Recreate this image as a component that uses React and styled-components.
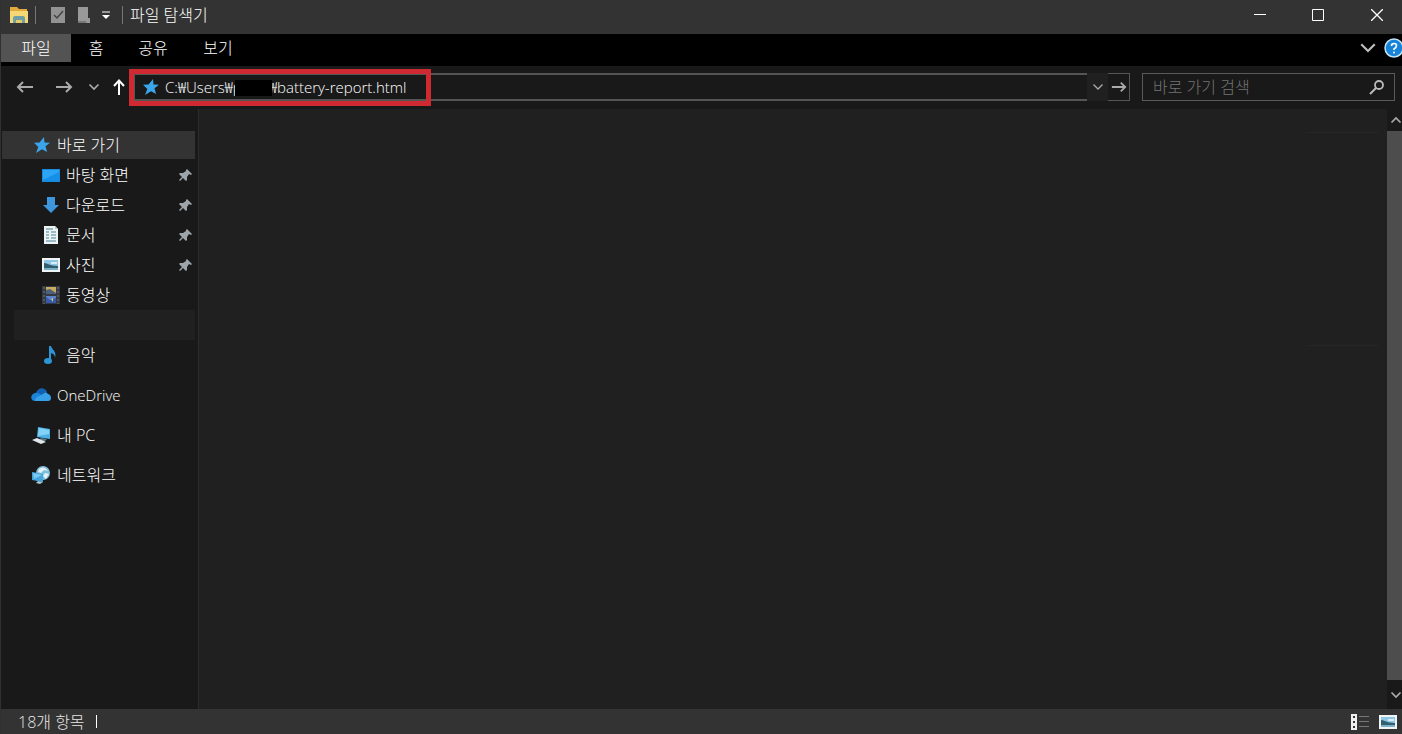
import { useState } from "react";
import styled, { createGlobalStyle } from "styled-components";

const GlobalStyle = createGlobalStyle`
  * {
    box-sizing: border-box;
  }
  body {
    margin: 0;
    background: #191919;
  }
  body, button, input {
    font-family: "Open Sans", "Noto Sans CJK KR", sans-serif;
    font-size: 16px;
    font-weight: 300;
    line-height: 20px;
    color: #fff;
  }
  button {
    padding: 0;
    border: none;
    background: transparent;
    display: flex;
    align-items: center;
    justify-content: center;
    flex-shrink: 0;
  }
  svg {
    display: block;
    flex-shrink: 0;
  }
`;

const Window = styled.div`
  display: flex;
  flex-direction: column;
  min-height: 100vh;
  border-left: 1px solid #303030;
`;

const TitleBar = styled.header`
  display: flex;
  align-items: center;
  height: 34px;
  padding: 0 0 4px 8px;
  background: #333;
`;

const QuickButton = styled.button`
  width: ${(props) => props.$width || 25}px;
  height: 24px;
`;

const Separator = styled.span`
  width: 1px;
  height: 18px;
  margin: 0 ${(props) => props.$gap}px 0 6px;
  background: #777;
`;

const WindowTitle = styled.h1`
  flex: 1;
  margin: 0;
  font-size: 16px;
  font-weight: 300;
`;

const CaptionButton = styled.button`
  width: 58px;
  height: 30px;

  &:last-child {
    width: 50px;
    margin-left: 5px;
  }
`;

const Ribbon = styled.nav`
  display: flex;
  align-items: center;
  height: 32px;
  padding-bottom: 4px;
  background: #000;
`;

const RibbonTab = styled.button`
  width: ${(props) => props.$width}px;
  height: 28px;
  background: ${(props) => (props.$active ? "#535353" : "transparent")};
`;

const RibbonTools = styled.div`
  display: flex;
  gap: 7px;
  margin-left: auto;
`;

const Toolbar = styled.div`
  display: flex;
  align-items: center;
  height: 43px;
  padding: 0 7px 1px 5px;
`;

const NavButton = styled.button`
  width: ${(props) => props.$width}px;
  height: 28px;
`;

const AddressBar = styled.div`
  position: relative;
  display: flex;
  flex: 1;
  height: 28px;
  margin-left: 1px;
`;

const AddressField = styled.label`
  display: flex;
  flex: 1;
  align-items: center;
  gap: 5px;
  padding-left: 5px;
  border: solid #555;
  border-width: 2px 0 2px 1px;
`;

const AddressInput = styled.input`
  flex: 1;
  min-width: 0;
  padding: 0;
  border: none;
  outline: none;
  background: transparent;
  font-size: 15px;
`;

const Redaction = styled.span`
  position: absolute;
  left: 101px;
  top: 7px;
  width: 37px;
  height: 16px;
  background: #000;
`;

const Highlight = styled.span`
  position: absolute;
  left: -5px;
  top: -4px;
  width: 302px;
  height: 37px;
  border: 5px solid #cf2a32;
  pointer-events: none;
`;

const HistoryButton = styled.button`
  width: 21px;
  height: 28px;
  background: #202020;
`;

const GoButton = styled.button`
  width: 22px;
  height: 28px;
  border: solid #555;
  border-width: 1px 1px 1px 0;
`;

const SearchBox = styled.label`
  display: flex;
  align-items: center;
  width: 253px;
  height: 28px;
  margin-left: 12px;
  padding: 0 9px 0 10px;
  border: 1px solid #5a5a5a;
`;

const SearchInput = styled.input`
  flex: 1;
  min-width: 0;
  padding: 0;
  border: none;
  outline: none;
  background: transparent;

  &::placeholder {
    color: #747474;
    opacity: 1;
  }
`;

const Main = styled.main`
  display: flex;
  flex: 1;
`;

const Sidebar = styled.aside`
  width: 198px;
  padding: 22px 3px 0 1px;
  border-right: 1px solid #2c2c2c;
`;

const TreeItem = styled.a`
  display: flex;
  align-items: center;
  gap: 6px;
  height: ${(props) => (props.$root ? 28 : 30)}px;
  margin-top: ${(props) => props.$space || 0}px;
  padding: 0 2px 0 ${(props) => (props.$root ? 29 : 40)}px;
  background: ${(props) => (props.$active ? "#333" : "transparent")};
  color: #fff;
  text-decoration: none;
`;

const ItemLabel = styled.span`
  flex: 1;
  font-size: ${(props) => props.$size || 16}px;
`;

const EmptyItem = styled.div`
  height: 30px;
  margin-left: 12px;
  background: #202020;
`;

const Files = styled.section`
  display: flex;
  flex: 1;
  flex-direction: column;
  align-items: flex-end;
  gap: 212px;
  padding: 23px 9px 0 0;
  background: #202020;
`;

const GroupLine = styled.hr`
  width: 72px;
  height: 1px;
  margin: 0;
  border: none;
  background: #262626;
`;

const Scrollbar = styled.div`
  display: flex;
  flex-direction: column;
  width: 15px;
`;

const ScrollButton = styled.button`
  height: ${(props) => props.$height}px;
  padding-left: 2px;
`;

const ScrollThumb = styled.div`
  flex: 1;
  background: #4d4d4d;
`;

const StatusBar = styled.footer`
  display: flex;
  align-items: center;
  height: 25px;
  padding: 0 5px 0 17px;
  background: #333;
`;

const StatusText = styled.span`
  padding-right: 11px;
  color: #e6e6e6;
`;

const Caret = styled.span`
  width: 1px;
  height: 13px;
  background: #fff;
`;

const ViewButtons = styled.div`
  display: flex;
  gap: 10px;
  margin-left: auto;
`;

const Chevron = ({ size = 12, color = "#aaa", up, weight = 1.7 }) => (
  <svg width={size} height={size} viewBox="0 0 12 12" fill="none" stroke={color} strokeWidth={weight}>
    <path d={up ? "M1.5 8.5 6 4l4.500 4.500" : "M1.500 3.500 6 8l4.500-4.500"} />
  </svg>
);

const Arrow = ({ direction, color = "#aaa", size = 18 }) => {
  const paths = {
    left: "M17 9H2M7 4 2 9l5 5",
    right: "M1 9h15M11 4l5 5-5 5",
    up: "M9 17V3M4 8l5-5.500L14 8",
  };
  return (
    <svg width={size} height={size} viewBox="0 0 18 18" fill="none" stroke={color} strokeWidth="2">
      <path d={paths[direction]} />
    </svg>
  );
};

const FolderIcon = () => (
  <svg width="20" height="18" viewBox="0 0 20 18">
    <path d="M1 1h7l2 2h8v13H1z" fill="#e3a93c" />
    <path d="M1 5h18v12H1z" fill="#f5d775" />
    <path d="M4 17v-5q0-2 2-2h8q2 0 2 2v5h-3v-3H7v3z" fill="#6e9fa5" />
    <path d="M7 14h6v3H7z" fill="#e8ca6b" />
  </svg>
);

const StarIcon = () => (
  <svg width="20" height="18" viewBox="-2 0 20 18">
    <path d="m11 1 .5 5.500 5.500.2-4.500 3.600 1.600 5.700-5.100-2.700L3 17l2.300-6.100L1 6.700l5.600-.1z" fill="#3aa5ea" />
  </svg>
);

const DesktopIcon = () => (
  <svg width="18" height="18" viewBox="0 0 18 18">
    <path d="M0 3h18v13H0z" fill="#168be0" />
    <path d="M1 4h16v10H1z" fill="#2ba5f4" />
    <path d="M1 14 17 6v8z" fill="#168fe8" />
  </svg>
);

const DownloadIcon = () => (
  <svg width="18" height="18" viewBox="0 0 18 18">
    <path d="M5 1h8v8h4l-8 8-8-8h4z" fill="#3e96dc" />
  </svg>
);

const DocumentIcon = () => (
  <svg width="18" height="18" viewBox="0 0 18 18">
    <path d="M2 0h11l3 3v15H2z" fill="#edf2f3" />
    <path d="M13 0v3h3" fill="#b9c5c9" />
    <path d="M4 3h7M4 6h3m2 0h5M4 9h3m2 0h5M4 12h3m2 0h5M4 15h10" stroke="#4a8399" />
  </svg>
);

const PictureIcon = () => (
  <svg width="18" height="18" viewBox="0 0 18 18">
    <path d="M0 2h18v14H0z" fill="#f1f4f5" />
    <path d="M2 4h14v10H2z" fill="#8fc5e5" />
    <path d="M2 7c4 0 5 3 14 3v2H2z" fill="#315f70" />
    <path d="M2 12h14v2H2z" fill="#7ab0ca" />
    <path d="M9 6h6v2H9z" fill="#d7edf7" />
  </svg>
);

const VideoIcon = () => (
  <svg width="18" height="20" viewBox="0 0 18 20">
    <path d="M0 1h18v18H0z" fill="#353a42" />
    <path d="M2 2v17M16 2v17" stroke="#59636d" strokeWidth="1.500" strokeDasharray="2 2" />
    <path d="M4 2h10v7H4z" fill="#c8aa61" />
    <path d="M4 5 8 4l6 4v1H4z" fill="#4e6178" />
    <path d="M4 11h10v7H4z" fill="#5c82cc" />
    <path d="m4 12 4 3 6-2v5H4z" fill="#335ba9" />
    <path d="m9 14 2-1v4z" fill="#e4ca75" />
  </svg>
);

const MusicIcon = () => (
  <svg width="18" height="20" viewBox="0 0 18 20">
    <ellipse cx="6" cy="16" rx="4" ry="3" fill="#2c95d5" />
    <path d="M7 1h2c1 4 6 5 4 12q0-4-4-5v8H7z" fill="#2c95d5" />
  </svg>
);

const CloudIcon = () => (
  <svg width="20" height="18" viewBox="0 0 20 18">
    <path d="M5 7c2-6 9-6 11-1l-4 5H2Q1 8 5 7" fill="#1261b5" />
    <path d="M4 15C-1 15-1 8 4 7q3-1 6 2l7 5z" fill="#1b83d8" />
    <path d="M4 15q0-4 4-5l4-2q3-3 5 0c4 1 4 7 0 7z" fill="#36a1e9" />
  </svg>
);

const PcIcon = () => (
  <svg width="20" height="18" viewBox="0 0 20 18">
    <path d="m7 1 12 2v10L6 11z" fill="#4bb1e7" />
    <path d="m8 2 10 2v4L7 10z" fill="#83d1f4" />
    <path d="m10 12 6 1-3 3-5-2z" fill="#567a8c" />
    <path d="m1 14 5-2 9 4-5 2z" fill="#dfe5e8" />
  </svg>
);

const NetworkIcon = () => (
  <svg width="20" height="18" viewBox="0 0 20 18">
    <circle cx="12" cy="7" r="7" fill="#80bfdc" />
    <path d="M8 3q5-4 9 2l-4-1-3 3-3-1zM14 7l4 1-3 5-3-3z" fill="#e2f2f6" />
    <path d="m1 6 11 2v8L1 14z" fill="#42a5df" />
    <path d="m2 7 9 2-8 4z" fill="#7dc9ed" />
    <path d="m7 15 5 1-3 2-4-1z" fill="#a9c9d5" />
  </svg>
);

const PinIcon = () => (
  <svg width="14" height="14" viewBox="0 0 14 14">
    <path d="m8 1 5 5-1 1-2-1-2 3v3l-1 1-3-3-3 3-1-1 3-3-3-3 1-1h3l3-2V2z" fill="#9da5aa" />
  </svg>
);

const ListIcon = () => (
  <svg width="18" height="16" viewBox="0 0 18 16">
    <path d="M0 0h6v16H0z" fill="#eee" />
    <path d="M2 3h2M2 8h2M2 13h2" stroke="#333" strokeWidth="2" />
    <path d="M8 2.500h10M8 7.500h10M8 12.500h10" stroke="#777" />
  </svg>
);

const folders = [
  { name: "바탕 화면", icon: <DesktopIcon />, pinned: true },
  { name: "다운로드", icon: <DownloadIcon />, pinned: true },
  { name: "문서", icon: <DocumentIcon />, pinned: true },
  { name: "사진", icon: <PictureIcon />, pinned: true },
  { name: "동영상", icon: <VideoIcon /> },
];

const App = () => {
  const [path, setPath] = useState("C:₩Users₩p       ₩battery-report.html");

  return (
    <Window>
      <GlobalStyle />
      <TitleBar>
        <FolderIcon />
        <Separator $gap={9} />
        <QuickButton aria-label="속성">
          <svg width="14" height="18" viewBox="0 0 14 18">
            <path d="M0 1h14v16H0z" fill="#929292" />
            <path d="m3 9 3 3 6-7" fill="none" stroke="#444" strokeWidth="1.5" />
          </svg>
        </QuickButton>
        <QuickButton aria-label="새 폴더">
          <svg width="14" height="18" viewBox="0 0 14 18">
            <path d="M2 1h10v11h2v5H2z" fill="#999" />
            <path d="M2 15h8v2H2z" fill="#777" />
          </svg>
        </QuickButton>
        <QuickButton $width={21} aria-label="빠른 실행 도구 모음 사용자 지정">
          <svg width="8" height="8" viewBox="0 0 8 8">
            <path d="M0 1h8" stroke="#fff" />
            <path d="M0 4h8L4 8z" fill="#fff" />
          </svg>
        </QuickButton>
        <Separator $gap={7} />
        <WindowTitle>파일 탐색기</WindowTitle>
        <CaptionButton aria-label="최소화">
          <svg width="12" height="12" viewBox="0 0 12 12">
            <path d="M0 5.500h12" stroke="#fff" />
          </svg>
        </CaptionButton>
        <CaptionButton aria-label="최대화">
          <svg width="12" height="12" viewBox="0 0 12 12">
            <path d="M.5.5h11v11H.5z" fill="none" stroke="#fff" />
          </svg>
        </CaptionButton>
        <CaptionButton aria-label="닫기">
          <svg width="12" height="12" viewBox="0 0 12 12">
            <path d="m0 0 12 12M12 0 0 12" stroke="#fff" strokeWidth="1.300" />
          </svg>
        </CaptionButton>
      </TitleBar>

      <Ribbon>
        <RibbonTab $active $width={70}>파일</RibbonTab>
        <RibbonTab $width={50}>홈</RibbonTab>
        <RibbonTab $width={64}>공유</RibbonTab>
        <RibbonTab $width={66}>보기</RibbonTab>
        <RibbonTools>
          <button aria-label="리본 확장">
            <Chevron size={18} weight={1.5} color="#bbb" />
          </button>
          <button aria-label="도움말">
            <svg width="18" height="20" viewBox="0 0 18 20">
              <circle cx="10" cy="10" r="9" fill="#1683d8" stroke="#c4e2f5" strokeWidth="1.500" />
              <path d="M7.500 8q0-2.500 2.500-2.500t2.500 2-2.500 3.500v1" fill="none" stroke="#fff" strokeWidth="1.600" />
              <circle cx="10" cy="14.500" r="1" fill="#fff" />
            </svg>
          </button>
        </RibbonTools>
      </Ribbon>

      <Toolbar>
        <NavButton $width={38} aria-label="뒤로"><Arrow direction="left" /></NavButton>
        <NavButton $width={40} aria-label="앞으로"><Arrow direction="right" /></NavButton>
        <NavButton $width={20} aria-label="최근 위치"><Chevron /></NavButton>
        <NavButton $width={29} aria-label="위로"><Arrow direction="up" color="#fff" /></NavButton>
        <AddressBar>
          <AddressField>
            <StarIcon />
            <AddressInput
              aria-label="주소"
              spellCheck={false}
              value={path}
              onChange={(e) => setPath(e.target.value)}
            />
          </AddressField>
          <HistoryButton aria-label="이전 위치"><Chevron weight={1.3} /></HistoryButton>
          <GoButton aria-label="이동"><Arrow direction="right" size={16} /></GoButton>
          <Redaction />
          <Highlight />
        </AddressBar>
        <SearchBox>
          <SearchInput aria-label="검색" placeholder="바로 가기 검색" />
          <svg width="16" height="16" viewBox="0 0 16 16" fill="none" stroke="#bbb">
            <circle cx="10" cy="6" r="4" strokeWidth="1.800" />
            <path d="m7 9-6 6" strokeWidth="2" />
          </svg>
        </SearchBox>
      </Toolbar>

      <Main>
        <Sidebar>
          <TreeItem href="#quick" $root $active>
            <StarIcon />
            <ItemLabel>바로 가기</ItemLabel>
          </TreeItem>
          {folders.map((folder, index) => (
            <TreeItem key={folder.name} href="#folder" $space={index === 0 ? 1 : 0}>
              {folder.icon}
              <ItemLabel>{folder.name}</ItemLabel>
              {folder.pinned && <PinIcon />}
            </TreeItem>
          ))}
          <EmptyItem />
          <TreeItem href="#music">
            <MusicIcon />
            <ItemLabel>음악</ItemLabel>
          </TreeItem>
          <TreeItem href="#onedrive" $root $space={11}>
            <CloudIcon />
            <ItemLabel $size={15}>OneDrive</ItemLabel>
          </TreeItem>
          <TreeItem href="#pc" $root $space={12}>
            <PcIcon />
            <ItemLabel>내 PC</ItemLabel>
          </TreeItem>
          <TreeItem href="#network" $root $space={12}>
            <NetworkIcon />
            <ItemLabel>네트워크</ItemLabel>
          </TreeItem>
        </Sidebar>
        <Files>
          <GroupLine />
          <GroupLine />
        </Files>
        <Scrollbar>
          <ScrollButton $height={22} aria-label="위로 스크롤"><Chevron up /></ScrollButton>
          <ScrollThumb />
          <ScrollButton $height={29} aria-label="아래로 스크롤"><Chevron /></ScrollButton>
        </Scrollbar>
      </Main>

      <StatusBar>
        <StatusText>18개 항목</StatusText>
        <Caret />
        <ViewButtons>
          <button aria-label="자세히"><ListIcon /></button>
          <button aria-label="큰 아이콘"><PictureIcon /></button>
        </ViewButtons>
      </StatusBar>
    </Window>
  );
};

export default App;
